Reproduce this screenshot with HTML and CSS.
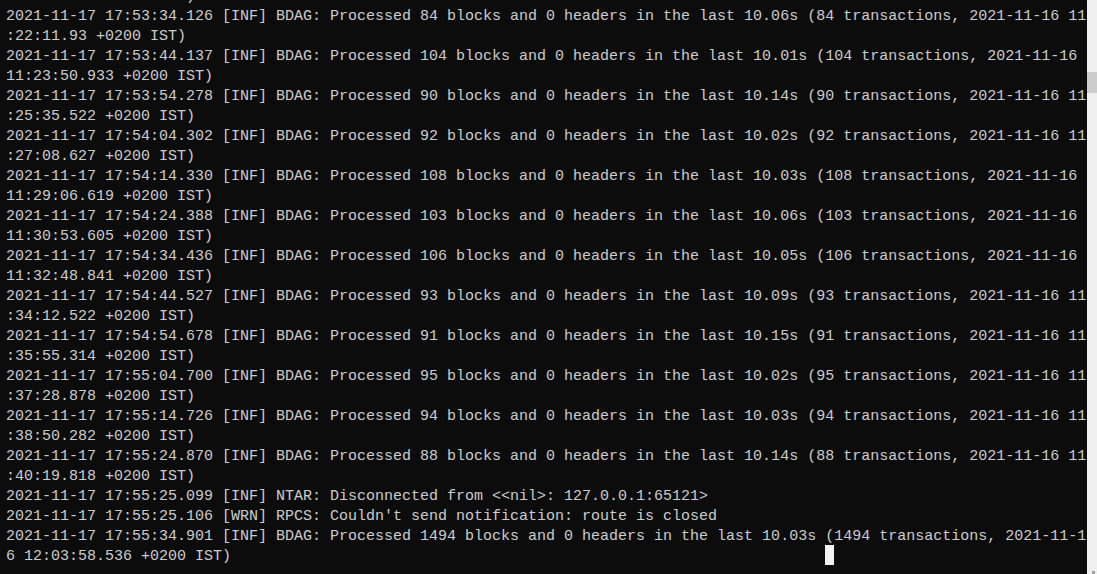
FILE: index.html
```html
<!DOCTYPE html>
<html>
<head>
<meta charset="utf-8">
<link rel="stylesheet" href="styles.css">
</head>
<body>
<div class="window">
  <div class="term">
    <div class="buffer">
      <div class="line">:20:41.316 +0200 IST)</div>
      <div class="line">2021-11-17 17:53:34.126 [INF] BDAG: Processed 84 blocks and 0 headers in the last 10.06s (84 transactions, 2021-11-16 11</div>
      <div class="line">:22:11.93 +0200 IST)</div>
      <div class="line">2021-11-17 17:53:44.137 [INF] BDAG: Processed 104 blocks and 0 headers in the last 10.01s (104 transactions, 2021-11-16</div>
      <div class="line">11:23:50.933 +0200 IST)</div>
      <div class="line">2021-11-17 17:53:54.278 [INF] BDAG: Processed 90 blocks and 0 headers in the last 10.14s (90 transactions, 2021-11-16 11</div>
      <div class="line">:25:35.522 +0200 IST)</div>
      <div class="line">2021-11-17 17:54:04.302 [INF] BDAG: Processed 92 blocks and 0 headers in the last 10.02s (92 transactions, 2021-11-16 11</div>
      <div class="line">:27:08.627 +0200 IST)</div>
      <div class="line">2021-11-17 17:54:14.330 [INF] BDAG: Processed 108 blocks and 0 headers in the last 10.03s (108 transactions, 2021-11-16</div>
      <div class="line">11:29:06.619 +0200 IST)</div>
      <div class="line">2021-11-17 17:54:24.388 [INF] BDAG: Processed 103 blocks and 0 headers in the last 10.06s (103 transactions, 2021-11-16</div>
      <div class="line">11:30:53.605 +0200 IST)</div>
      <div class="line">2021-11-17 17:54:34.436 [INF] BDAG: Processed 106 blocks and 0 headers in the last 10.05s (106 transactions, 2021-11-16</div>
      <div class="line">11:32:48.841 +0200 IST)</div>
      <div class="line">2021-11-17 17:54:44.527 [INF] BDAG: Processed 93 blocks and 0 headers in the last 10.09s (93 transactions, 2021-11-16 11</div>
      <div class="line">:34:12.522 +0200 IST)</div>
      <div class="line">2021-11-17 17:54:54.678 [INF] BDAG: Processed 91 blocks and 0 headers in the last 10.15s (91 transactions, 2021-11-16 11</div>
      <div class="line">:35:55.314 +0200 IST)</div>
      <div class="line">2021-11-17 17:55:04.700 [INF] BDAG: Processed 95 blocks and 0 headers in the last 10.02s (95 transactions, 2021-11-16 11</div>
      <div class="line">:37:28.878 +0200 IST)</div>
      <div class="line">2021-11-17 17:55:14.726 [INF] BDAG: Processed 94 blocks and 0 headers in the last 10.03s (94 transactions, 2021-11-16 11</div>
      <div class="line">:38:50.282 +0200 IST)</div>
      <div class="line">2021-11-17 17:55:24.870 [INF] BDAG: Processed 88 blocks and 0 headers in the last 10.14s (88 transactions, 2021-11-16 11</div>
      <div class="line">:40:19.818 +0200 IST)</div>
      <div class="line">2021-11-17 17:55:25.099 [INF] NTAR: Disconnected from &lt;&lt;nil&gt;: 127.0.0.1:65121&gt;</div>
      <div class="line">2021-11-17 17:55:25.106 [WRN] RPCS: Couldn't send notification: route is closed</div>
      <div class="line">2021-11-17 17:55:34.901 [INF] BDAG: Processed 1494 blocks and 0 headers in the last 10.03s (1494 transactions, 2021-11-1</div>
      <div class="line">6 12:03:58.536 +0200 IST)                                                                  <span class="cursor"> </span></div>
    </div>
  </div>
  <div class="scrollbar">
    <div class="thumb"></div>
    <div class="arrow"></div>
  </div>
</div>
</body>
</html>
```

FILE: styles.css
```css
html, body {
  margin: 0;
  padding: 0;
  background: #0c0c0c;
}

.window {
  display: flex;
  width: 1097px;
  height: 574px;
  overflow: hidden;
}

.term {
  flex: 0 0 1087px;
  width: 1087px;
  height: 574px;
  overflow: hidden;
  background: #0c0c0c;
  color: #cccccc;
  font-family: "Liberation Mono", "DejaVu Sans Mono", monospace;
  font-size: 15px;
}

.buffer {
  margin-top: -15px;
  padding-left: 6px;
}

.line {
  box-sizing: border-box;
  white-space: pre;
  height: 20px;
  padding-top: 2px;
  line-height: 20px;
}

.cursor {
  display: inline-block;
  width: 9px;
  height: 20px;
  margin-top: -2px;
  vertical-align: top;
  background: #f2f2f2;
}

.scrollbar {
  flex: 1 1 auto;
  display: flex;
  flex-direction: column;
  background: #f0f0f0;
  height: 574px;
}

.thumb {
  margin-top: 72px;
  height: 21px;
  background: #cdcdcd;
}

.arrow {
  margin-top: auto;
  margin-left: 5px;
  width: 3px;
  height: 3px;
  background: #a0a0a0;
}
```
